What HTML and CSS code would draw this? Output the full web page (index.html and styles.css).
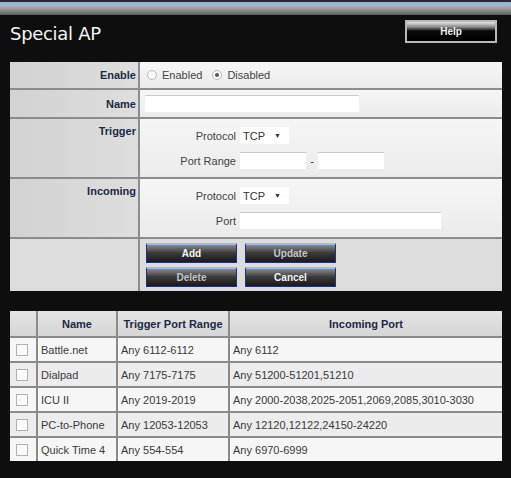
FILE: index.html
```html
<!DOCTYPE html>
<html>

<head>
    <title>Special AP</title>
    <link rel="stylesheet" href="styles.css">
</head>

<body>
    <div class="topbar"></div>

    <div class="page">
        <div class="header">
            <p class="title-page">Special AP</p>
            <button class="btn-help" type="button">Help</button>
        </div>

        <div class="form">
            <div class="row row-enable">
                <div class="label">Enable</div>
                <div class="value">
                    <label class="radio"><span class="dot"></span>Enabled</label>
                    <label class="radio"><span class="dot checked"></span>Disabled</label>
                </div>
            </div>

            <div class="row row-name">
                <div class="label">Name</div>
                <div class="value">
                    <input class="txt txt-name" type="text">
                </div>
            </div>

            <div class="row row-block">
                <div class="label label-top">Trigger</div>
                <div class="value value-col">
                    <div class="line">
                        <span class="sub">Protocol</span>
                        <span class="select">TCP <span class="arrow">&#9660;</span></span>
                    </div>
                    <div class="line">
                        <span class="sub">Port Range</span>
                        <input class="txt txt-port" type="text">
                        <span class="dash">-</span>
                        <input class="txt txt-port" type="text">
                    </div>
                </div>
            </div>

            <div class="row row-block">
                <div class="label label-top">Incoming</div>
                <div class="value value-col">
                    <div class="line">
                        <span class="sub">Protocol</span>
                        <span class="select">TCP <span class="arrow">&#9660;</span></span>
                    </div>
                    <div class="line">
                        <span class="sub">Port</span>
                        <input class="txt txt-wide" type="text">
                    </div>
                </div>
            </div>

            <div class="row row-buttons">
                <div class="label"></div>
                <div class="value buttons">
                    <button class="btn">Add</button>
                    <button class="btn btn-dim">Update</button>
                    <button class="btn btn-dim">Delete</button>
                    <button class="btn">Cancel</button>
                </div>
            </div>
        </div>

        <table class="list">
            <tr>
                <th class="col-check"></th>
                <th class="col-name">Name</th>
                <th class="col-trigger">Trigger Port Range</th>
                <th>Incoming Port</th>
            </tr>
            <tr>
                <td><span class="box"></span></td>
                <td>Battle.net</td>
                <td>Any 6112-6112</td>
                <td>Any 6112</td>
            </tr>
            <tr>
                <td><span class="box"></span></td>
                <td>Dialpad</td>
                <td>Any 7175-7175</td>
                <td>Any 51200-51201,51210</td>
            </tr>
            <tr>
                <td><span class="box"></span></td>
                <td>ICU II</td>
                <td>Any 2019-2019</td>
                <td>Any 2000-2038,2025-2051,2069,2085,3010-3030</td>
            </tr>
            <tr>
                <td><span class="box"></span></td>
                <td>PC-to-Phone</td>
                <td>Any 12053-12053</td>
                <td>Any 12120,12122,24150-24220</td>
            </tr>
            <tr>
                <td><span class="box"></span></td>
                <td>Quick Time 4</td>
                <td>Any 554-554</td>
                <td>Any 6970-6999</td>
            </tr>
        </table>
    </div>
</body>

</html>
```

FILE: styles.css
```css
body {
    margin: 0;
    padding: 0;
    font-family: "Liberation Sans", Arial, sans-serif;
    font-size: 11px;
    color: #333;
    background-color: #0e0e0e;
}

.topbar {
    height: 13px;
    border-top: 2px solid #2a2a2a;
    background: linear-gradient(#8fb2e0 0px, #a9b6c6 3px, #9a9a9a 7px, #5c5c5c 13px);
}

.page {
    padding: 0 9px 0 10px;
}

.header {
    height: 47px;
    display: flex;
    align-items: flex-start;
    justify-content: space-between;
    padding-top: 5px;
    box-sizing: border-box;
}

.title-page {
    margin: 3px 0 0 0;
    color: #f4f4f4;
    font-size: 18px;
    font-family: "DejaVu Sans", sans-serif;
    letter-spacing: -0.3px;
}

.btn-help {
    width: 92px;
    height: 23px;
    margin-right: 5px;
    border: 2px solid #b9b9b9;
    background: linear-gradient(#e8e8e8 0px, #8a8a8a 5px, #0a0a0a 9px, #000 100%);
    color: #f0f0f0;
    font-weight: bold;
    font-size: 10px;
    font-family: "Liberation Sans", Arial, sans-serif;
    padding: 0;
}

.form {
    background-color: #f0f0f0;
}

.row {
    display: flex;
    border-top: 2px solid #8c8c8c;
}

.row:first-child {
    border-top: none;
}

.label {
    width: 126px;
    flex-shrink: 0;
    text-align: right;
    font-weight: bold;
    color: #1c2a44;
    padding-right: 2px;
    border-right: 2px solid #8c8c8c;
    background: linear-gradient(90deg, #d2d2d2, #dedede);
    display: flex;
    align-items: center;
    justify-content: flex-end;
}

.label-top {
    align-items: flex-start;
    padding-top: 6px;
}

.value {
    flex: 1;
    display: flex;
    align-items: center;
    padding-left: 5px;
    background: linear-gradient(#f6f6f6, #ebebeb);
}

.row-enable {
    height: 26px;
}

.row-name {
    height: 27px;
}

.row-block {
    height: 58px;
}

.row-buttons {
    height: 52px;
}

.row-buttons .label {
    background: #dcdcdc;
}

.row-buttons .value {
    background: #dcdcdc;
}

.radio {
    display: flex;
    align-items: center;
    margin-left: 2px;
    margin-right: 8px;
    color: #444;
}

.dot {
    width: 8px;
    height: 8px;
    border: 1px solid #b5b5b5;
    border-radius: 50%;
    background: #fafafa;
    margin-right: 5px;
    position: relative;
}

.dot.checked::after {
    content: "";
    position: absolute;
    top: 2px;
    left: 2px;
    width: 4px;
    height: 4px;
    border-radius: 50%;
    background: #555;
}

.txt {
    height: 17px;
    border: none;
    border-top: 1px solid #c9c9c9;
    background: #ffffff;
    padding: 0;
    box-sizing: border-box;
}

.txt-name {
    width: 214px;
}

.txt-port {
    width: 66px;
}

.txt-wide {
    width: 201px;
}

.value-col {
    flex-direction: column;
    align-items: flex-start;
    justify-content: center;
    gap: 6px;
    padding-left: 0;
}

.line {
    display: flex;
    align-items: center;
    height: 19px;
}

.sub {
    width: 96px;
    text-align: right;
    padding-right: 4px;
    color: #444;
}

.select {
    width: 49px;
    height: 17px;
    background: #ffffff;
    display: flex;
    align-items: center;
    padding-left: 3px;
    box-sizing: border-box;
    color: #333;
}

.arrow {
    font-size: 7px;
    margin-left: 9px;
}

.dash {
    width: 12px;
    text-align: center;
}

.buttons {
    display: grid;
    grid-template-columns: 91px 91px;
    gap: 4px 8px;
    align-content: center;
    padding-left: 6px;
}

.btn {
    height: 20px;
    border: 1px solid #22346e;
    border-top: 2px solid #9fb6e6;
    background: linear-gradient(#8a8a8a 0px, #3a3a3a 8px, #1a1a1a 100%);
    color: #f4f4f4;
    font-weight: bold;
    font-size: 10px;
    font-family: "Liberation Sans", Arial, sans-serif;
    padding: 0;
}

.btn-dim {
    color: #c4c4c4;
}

.list {
    margin-top: 20px;
    width: 100%;
    border-collapse: collapse;
    background: #f2f2f2;
}

.list th,
.list td {
    border: 2px solid #8a8a8a;
    height: 23px;
    padding: 0 3px;
    text-align: left;
    color: #3a3a3a;
}

.list th {
    height: 25px;
    text-align: center;
    background: linear-gradient(#e4e4e4, #d6d6d6);
    color: #1c2a44;
}

.list tr:first-child th {
    border-top: none;
}

.list tr th:first-child,
.list tr td:first-child {
    border-left: none;
}

.list tr th:last-child,
.list tr td:last-child {
    border-right: none;
}

.list tr:last-child td {
    border-bottom: none;
}

.list tr:nth-child(odd) td {
    background: #ececec;
}

.list tr:nth-child(even) td {
    background: #f6f6f6;
}

.col-check {
    width: 20px;
}

.col-name {
    width: 72px;
}

.col-trigger {
    width: 104px;
}

.box {
    display: block;
    width: 10px;
    height: 10px;
    border: 1px solid #b0b0b0;
    background: #fbfbfb;
    margin-left: 3px;
}
```
